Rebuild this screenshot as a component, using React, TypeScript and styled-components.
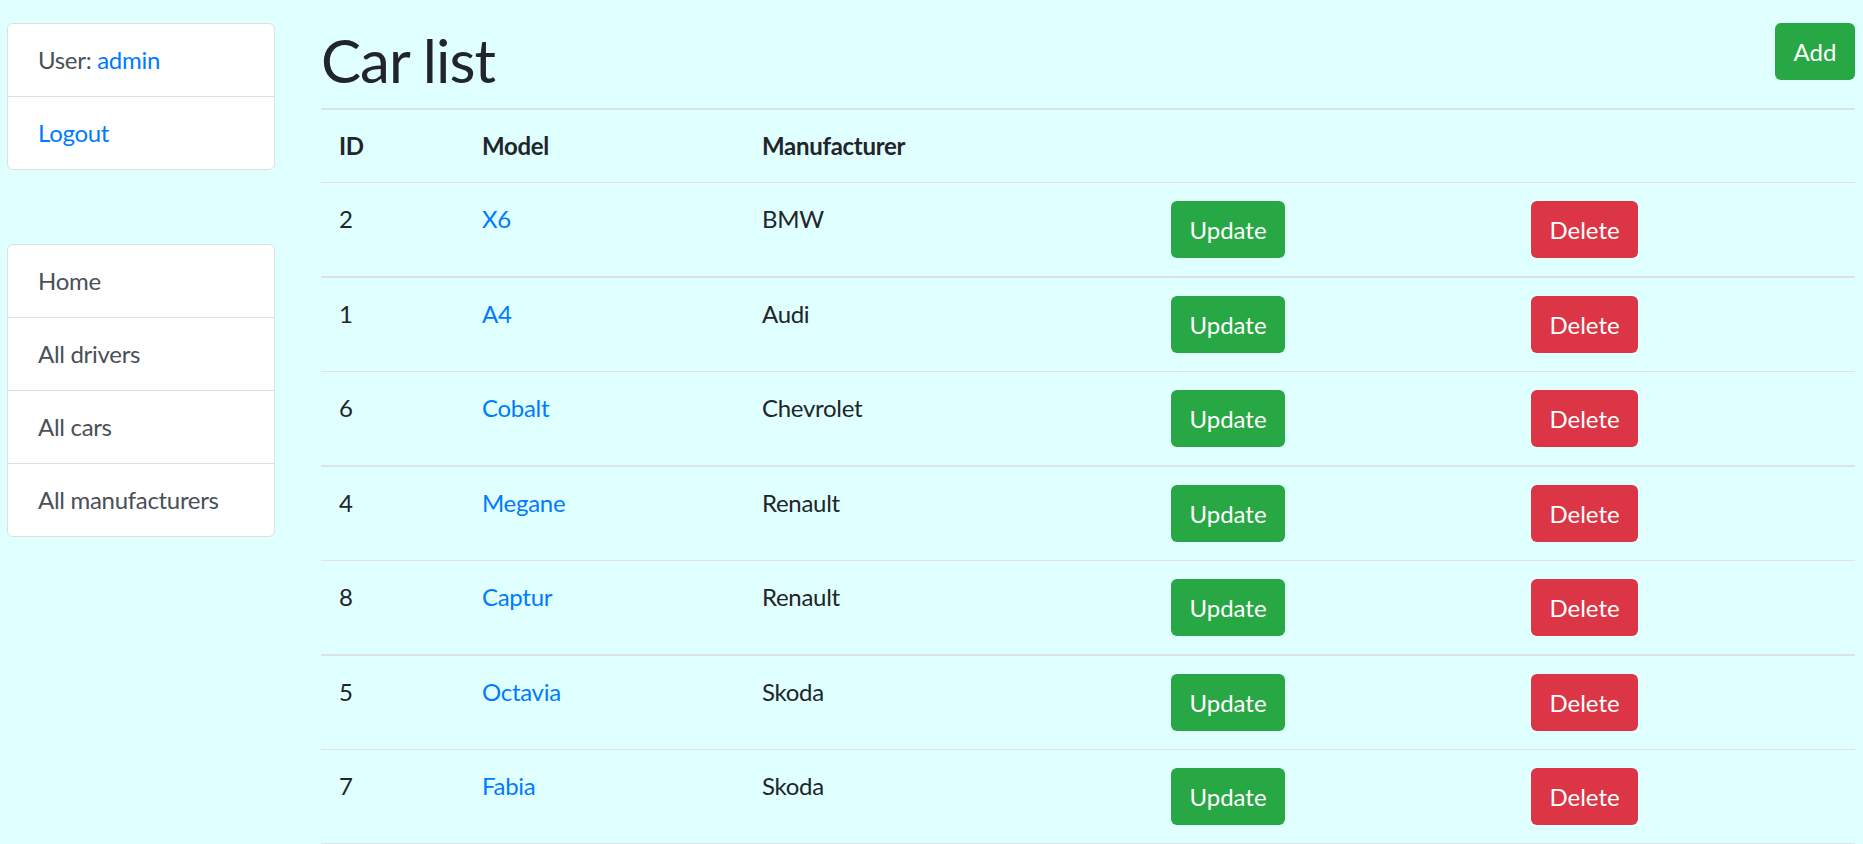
import React from "react";
import styled, { createGlobalStyle } from "styled-components";

const GlobalStyle = createGlobalStyle`
  html, body {
    margin: 0;
    padding: 0;
    background: #e0ffff;
  }
  body {
    font-family: Lato, "Open Sans", "Liberation Sans", sans-serif;
    font-size: 24px;
    line-height: 36px;
    letter-spacing: -0.3px;
    color: #212529;
  }
  * { box-sizing: border-box; }
`;

const Page = styled.div`
  display: flex;
  align-items: flex-start;
  gap: 46px;
  padding: 23px 8px 0 7px;
  min-height: 844px;
`;

const Sidebar = styled.aside`
  width: 268px;
  flex: none;
  display: flex;
  flex-direction: column;
  gap: 74px;
`;

const Card = styled.div`
  display: flex;
  flex-direction: column;
  background: #fff;
  border: 1px solid #dfdfdf;
  border-radius: 6px;
  overflow: hidden;
`;

const CardItem = styled.div`
  padding: 18px 30px;
  line-height: 36px;
  color: #495057;
  & + & {
    border-top: 1px solid #dfdfdf;
  }
`;

const Link = styled.a`
  color: #007bff;
  text-decoration: none;
`;

const Main = styled.main`
  flex: 1;
  min-width: 0;
`;

const Header = styled.div`
  display: flex;
  justify-content: space-between;
  align-items: flex-start;
`;

const Title = styled.h1`
  margin: 1px 0 12px;
  font-size: 60px;
  line-height: 72px;
  font-weight: 400;
  letter-spacing: -1px;
  color: #212529;
`;

const Button = styled.button<{ $variant: "success" | "danger"; $w: number }>`
  width: ${(p) => p.$w}px;
  height: 57px;
  padding: 0;
  border: none;
  border-radius: 6px;
  font-family: inherit;
  font-size: 24px;
  line-height: 36px;
  color: #fff;
  background: ${(p) => (p.$variant === "success" ? "#28a745" : "#dc3545")};
  cursor: pointer;
`;

const Table = styled.table`
  width: 100%;
  border-collapse: collapse;
  table-layout: fixed;
`;

const Col = styled.col<{ $w?: number }>`
  width: ${(p) => (p.$w ? `${p.$w}px` : "auto")};
`;

const HeadCell = styled.th`
  text-align: left;
  font-weight: 700;
  padding: 18px 18px;
  line-height: 36px;
  vertical-align: top;
  border-top: 2px solid #dee2e6;
  border-bottom: 1px solid #dee2e6;
`;

const Row = styled.tr<{ $thick: boolean; $last: boolean }>`
  & > td {
    border-top: ${(p) => (p.$thick ? 2 : 1)}px solid #dee2e6;
    border-bottom: ${(p) => (p.$last ? "2px solid #dee2e6" : "none")};
  }
`;

const Cell = styled.td`
  padding: 18px 18px;
  line-height: 36px;
  vertical-align: top;
`;

const cars = [
  { id: 2, model: "X6", manufacturer: "BMW" },
  { id: 1, model: "A4", manufacturer: "Audi" },
  { id: 6, model: "Cobalt", manufacturer: "Chevrolet" },
  { id: 4, model: "Megane", manufacturer: "Renault" },
  { id: 8, model: "Captur", manufacturer: "Renault" },
  { id: 5, model: "Octavia", manufacturer: "Skoda" },
  { id: 7, model: "Fabia", manufacturer: "Skoda" },
];

export default function App() {
  return (
    <>
      <GlobalStyle />
      <Page>
        <Sidebar>
          <Card>
            <CardItem>
              User: <Link href="#">admin</Link>
            </CardItem>
            <CardItem>
              <Link href="#">Logout</Link>
            </CardItem>
          </Card>
          <Card>
            <CardItem>Home</CardItem>
            <CardItem>All drivers</CardItem>
            <CardItem>All cars</CardItem>
            <CardItem>All manufacturers</CardItem>
          </Card>
        </Sidebar>
        <Main>
          <Header>
            <Title>Car list</Title>
            <Button $variant="success" $w={80}>Add</Button>
          </Header>
          <Table>
            <colgroup>
              <Col $w={143} />
              <Col $w={280} />
              <Col $w={409} />
              <Col $w={360} />
              <Col />
            </colgroup>
            <thead>
              <tr>
                <HeadCell>ID</HeadCell>
                <HeadCell>Model</HeadCell>
                <HeadCell>Manufacturer</HeadCell>
                <HeadCell />
                <HeadCell />
              </tr>
            </thead>
            <tbody>
              {cars.map((c, i) => (
                <Row key={c.id} $thick={i % 2 === 1} $last={i === cars.length - 1}>
                  <Cell>{c.id}</Cell>
                  <Cell>
                    <Link href="#">{c.model}</Link>
                  </Cell>
                  <Cell>{c.manufacturer}</Cell>
                  <Cell>
                    <Button $variant="success" $w={114}>Update</Button>
                  </Cell>
                  <Cell>
                    <Button $variant="danger" $w={107}>Delete</Button>
                  </Cell>
                </Row>
              ))}
            </tbody>
          </Table>
        </Main>
      </Page>
    </>
  );
}
